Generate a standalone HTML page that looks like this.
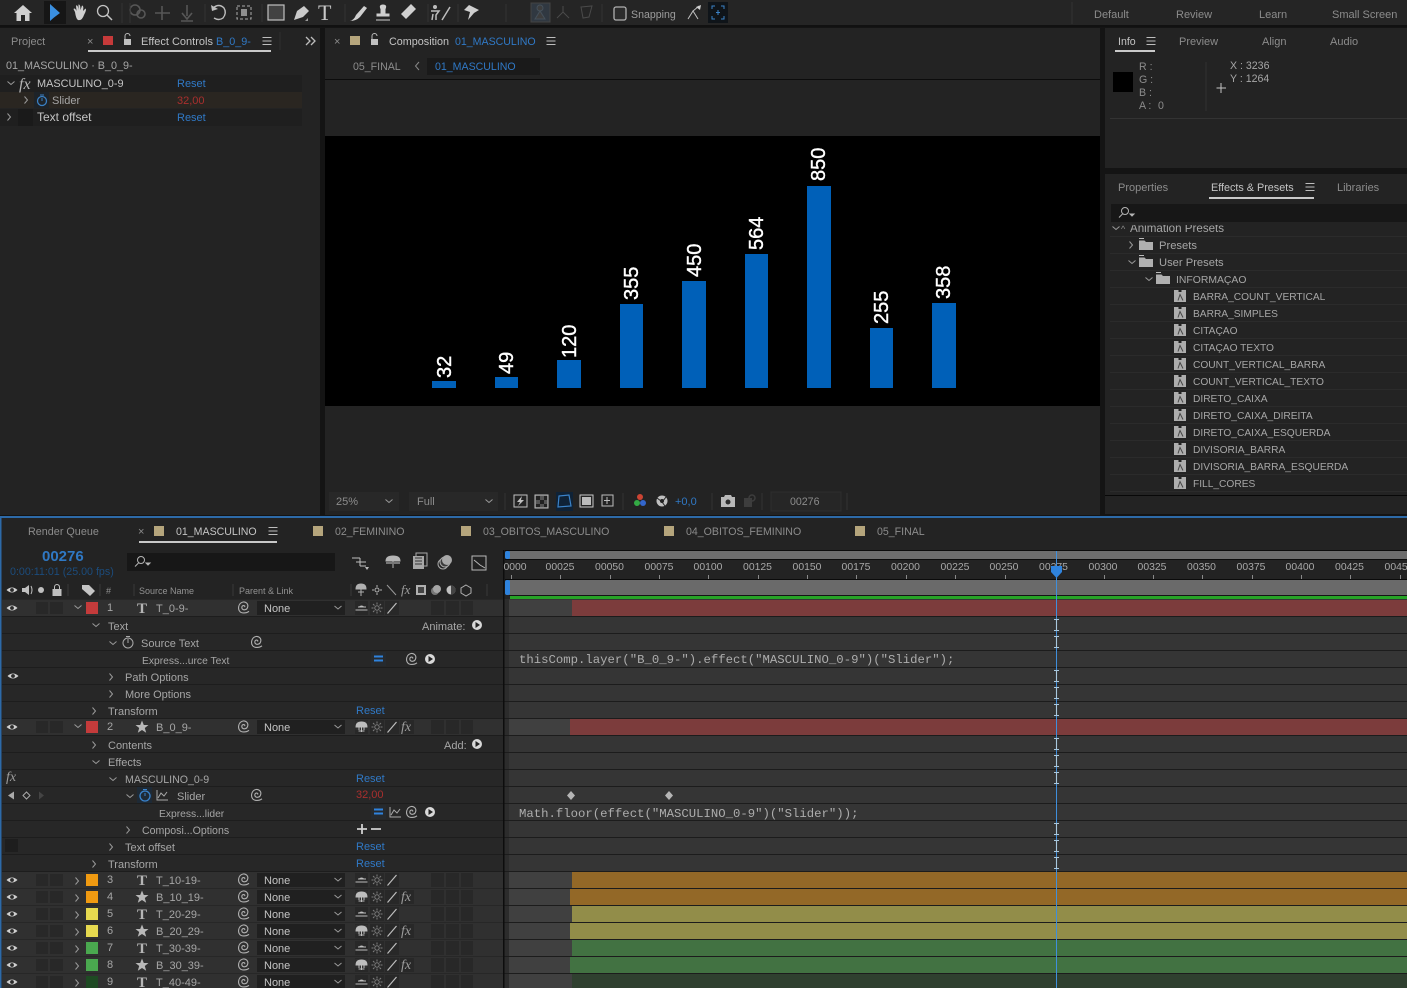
<!DOCTYPE html>
<html><head><meta charset="utf-8"><title>After Effects</title>
<style>
html,body{margin:0;padding:0;background:#141414;width:1407px;height:988px;overflow:hidden}
svg{display:block;position:absolute;left:0;top:0}
text{font-family:"Liberation Sans",sans-serif;font-size:11px;fill:#a6a6a6;white-space:pre}
.c{font-size:10.6px}
.p{font-size:10.2px}
.b{fill:#3079c6}
.r{fill:#a92f2e}
.w{fill:#c4c4c4}
.d{fill:#8c8c8c}
.m{font-family:"Liberation Mono",monospace;font-size:12.3px;fill:#adadad}
.n{font-size:20px;fill:#fff;stroke:#fff;stroke-width:.4}
.tk{font-size:10.4px;fill:#a8a8a8;text-anchor:middle}
.s{font-family:"Liberation Serif",serif;font-weight:bold;font-size:15px;fill:#b5b5b5}
.f{font-family:"Liberation Serif",serif;font-style:italic;font-size:14px;fill:#9c9c9c}
.h{font-size:9px;fill:#929292}
</style></head><body>
<svg width="1407" height="988" viewBox="0 0 1407 988">
<defs>
<g id="eye"><path d="M-5.5 0Q0-5 5.5 0Q0 5-5.5 0Z" fill="#cfcfcf"/><circle r="1.9" fill="#2b2b2b"/></g>
<path id="sp" fill="none" stroke="#b0b0b0" stroke-width="1.100" d="M.5-.5C2-2-2.200-3-2.200 0C-2.200 3.200 3.200 3.200 3.800-1C4.300-4.300 1-6-1-5.500C-5.500-4.500-6.500 1-4.300 3.800C-2.700 6 2.200 6 5 3.800"/>
<path id="cr" fill="none" stroke="#9a9a9a" d="M-1.5-3.5L1.5 0L-1.5 3.5"/>
<path id="cd" fill="none" stroke="#9a9a9a" d="M-3.5-1.5L0 1.5L3.5-1.5"/>
<g id="ham" stroke="#bdbdbd"><path d="M-4.500-3.500H4.500M-4.500 0H4.500M-4.500 3.500H4.500"/></g>
<polygon id="star" fill="#b8b8b8" points="0,-6.500 1.800,-2 6.500,-2 2.800,1 4.200,5.800 0,3 -4.200,5.800 -2.800,1 -6.500,-2 -1.800,-2"/>
<g id="play"><circle r="5" fill="#d8d8d8"/><path d="M-1.500-3L3 0L-1.500 3Z" fill="#222"/></g>
<g id="ib" fill="none" stroke="#a9c8de" stroke-width="1.100"><path d="M-2.500-5.500H2.500M-2.500 5.500H2.500M0-5.500V5.500"/></g>
<g id="lay">
<rect x="2" y="-8" width="501" height="16" fill="#303030"/>
<use href="#eye" x="12"/>
<rect x="36" y="-6" width="12" height="12" fill="#282828"/><rect x="50" y="-6" width="13" height="12" fill="#282828"/>
<rect x="257" y="-7" width="88" height="14" fill="#202020"/>
<use href="#cd" x="338" y="-.5"/>
<use href="#sp" x="244" y="-.5"/>
<rect x="355" y="-7" width="13" height="14" fill="#282828"/><rect x="370" y="-7" width="14" height="14" fill="#282828"/><rect x="385" y="-7" width="14" height="14" fill="#282828"/>
<path d="M358-1H366M355.500 2H367.500" stroke="#bdbdbd"/><path d="M358.500-1Q361.500-4 364.500-1" fill="#bdbdbd"/>
<g fill="none" stroke="#7e7e7e"><circle cx="377" r="2.200"/><path d="M377-5.500V-3.500M377 3.500V5.500M371.500 0H373.500M380.500 0H382.500M373-4L374.500-2.500M381-4L379.500-2.500M373 4L374.500 2.500M381 4L379.500 2.500"/></g>
<path d="M387.500 5.500L396.500-5" stroke="#bdbdbd" stroke-width="1.200"/>
<rect x="431" y="-7" width="13" height="14" fill="#282828"/><rect x="446" y="-7" width="13" height="14" fill="#282828"/><rect x="461" y="-7" width="12" height="14" fill="#282828"/>
</g>
<g id="shy"><rect x="355.500" y="-6" width="12" height="9" fill="#303030"/><path d="M356 0Q356-5 361.500-5Q367-5 367 0ZM361.500 0V5M358.500 4H364.500M359 0V3M364 0V3" fill="#bdbdbd" stroke="#bdbdbd"/></g>
<g id="fb"><rect x="400" y="-7" width="14" height="14" fill="#282828"/></g>
<g id="pf"><path d="M-7-6.500H-2" stroke="#bbb"/><path d="M-7-4.500H-1.500L0-3H7V5H-7Z" fill="#b0b0b0"/></g>
<g id="pr"><path d="M-6-3V-6H-1.500V-4H1.500V-6H6V6H-6Z" fill="#adadad"/><path d="M-2 4.500L0-1.500L1.500 1.500L3 4.500" stroke="#474747" fill="none"/></g>
</defs>

<rect width="1407" height="988" fill="#141414"/>
<!-- top toolbar -->
<rect width="1407" height="25" fill="#252525"/>
<rect y="25" width="1407" height="2" fill="#111"/>
<path d="M14 13L23 5L32 13H29.500V21H25V15H21V21H16.500V13Z" fill="#d0d0d0"/>
<rect x="44" y="1" width="22" height="23" fill="#161616"/>
<path d="M50 4V21L54 17.500L60 13Z" fill="#3a8fe0"/>
<path d="M75 12L73.500 9Q75 7.500 76.500 11L76 5.500Q78 4.500 78.500 10V4.500Q80.500 4 80.500 10L82 5.500Q84 5.500 83 11L85.500 8.500Q87 9.500 84 15Q82 21 78 20Q76 19 75 12Z" fill="#cfcfcf"/>
<circle cx="103" cy="11" r="5.500" fill="none" stroke="#c4c4c4" stroke-width="1.300"/><path d="M107 15L112 20" stroke="#c4c4c4" stroke-width="1.500"/>
<g fill="none" stroke="#575757" stroke-width="1.600"><circle cx="135" cy="10" r="5"/><circle cx="141" cy="14" r="4"/><path d="M155 13H170M162 6V20M187 5V16M182 13L187 19L192 13M181 21H193"/></g>
<path d="M213 8Q219 3 224 8Q227 13 223 18Q219 21 214 18" fill="none" stroke="#bdbdbd" stroke-width="1.400"/><path d="M211 5L212 11L218 9Z" fill="#bdbdbd"/>
<rect x="237" y="6" width="14" height="13" fill="none" stroke="#aaa" stroke-dasharray="3 2"/><rect x="241" y="9" width="6" height="7" fill="#8f8f8f"/>
<rect x="268" y="5" width="16" height="15" fill="#424242" stroke="#c0c0c0" stroke-width="1.200"/>
<path d="M294 20L297 11L304 6L309 11L303 17Z" fill="#cacaca"/><path d="M305 21H308V18" fill="#999"/>
<text x="318" y="20" style="font-family:'Liberation Serif',serif;font-size:22px;fill:#c8c8c8">T</text>
<path d="M350 21Q354 20 356 15L364 6L367 8L360 17Q356 21 350 21Z" fill="#cfcfcf"/>
<path d="M376 20H390M377 16H389V14H385V9Q387 5 383 5Q379 5 381 9V14H377Z" fill="#cfcfcf" stroke="#cfcfcf"/>
<path d="M401 14L411 4L416 9L406 19Z" fill="#d0d0d0"/>
<circle cx="435" cy="7" r="2" fill="#bdbdbd"/><path d="M431 11H439L436 15V20M433 14L432 20M442 20L450 7" stroke="#bdbdbd" stroke-width="1.500" fill="none"/>
<path d="M469 5L479 10L474 13L468 20L470 12L464 10Z" fill="#cfcfcf"/>
<g fill="#3d3d3d" stroke="#444"><rect x="531" y="3" width="19" height="19" fill="#303841"/><path d="M537 8a3 3 0 1 0 6 0a3 3 0 1 0-6 0M535 19L540 11L545 19Z" stroke="#45505a"/></g>
<path d="M563 6V12L557 18M563 12L569 18M581 7L592 6L589 17L583 18Z" stroke="#4a4a4a" fill="none"/>
<rect x="614" y="7" width="12" height="13" rx="2" fill="#2c2c2c" stroke="#b0b0b0" stroke-width="1.300"/>
<text x="631" y="18" class="c" style="fill:#9d9d9d">Snapping</text>
<path d="M688 19L693 11L698 19M699 6L693 11" stroke="#c0c0c0" fill="none"/><path d="M696 7L701 5L700 10Z" fill="#cfcfcf"/>
<rect x="708" y="2" width="20" height="21" fill="#0f1419"/>
<path d="M712 9V6H715M721 6H724V9M712 16V19H715M721 19H724V16M718 10V15M716 12.500H720" stroke="#3b83c9" fill="none"/>
<path d="M130 3V23M122 3V23M205 4V22M262 4V22M345 4V22M428 4V22M458 4V22M506 4V22M602 4V22M1072 2V24" stroke="#333"/>
<text x="1094" y="18" class="c d" style="font-size:11px">Default</text>
<text x="1176" y="18" class="c d" style="font-size:11px">Review</text>
<text x="1259" y="18" class="c d" style="font-size:11px">Learn</text>
<text x="1332" y="18" class="c d" style="font-size:11px">Small Screen</text>

<!-- left panel -->
<rect x="0" y="28" width="320" height="487" fill="#232323"/>
<text x="11" y="45" class="d">Project</text>
<text x="87" y="45" class="d">×</text>
<rect x="103" y="36" width="10" height="9" fill="#c63a3a"/>
<path d="M125 39V36a2.500 2.500 0 0 1 5 0" fill="none" stroke="#bbb"/><rect x="124" y="39" width="7" height="6" fill="#c0c0c0"/>
<text x="141" y="45" class="w">Effect Controls</text>
<text x="216" y="45" class="b" style="font-size:10.800px">B_0_9-</text>
<use href="#ham" x="267" y="41"/>
<rect x="88" y="50" width="183" height="2" fill="#c9c9c9"/>
<path d="M306 37L310 41L306 45M311 37L315 41L311 45" fill="none" stroke="#bdbdbd" stroke-width="1.300"/>
<path d="M280 32V50" stroke="#2f2f2f"/>
<text x="6" y="69" style="font-size:10.800px">01_MASCULINO · B_0_9-</text>
<rect x="0" y="75" width="302" height="17" fill="#1f1f1f"/>
<rect x="0" y="92" width="302" height="16" fill="#2a2621"/>
<rect x="0" y="109" width="302" height="17" fill="#1f1f1f"/>
<use href="#cd" x="11" y="83"/>
<text x="19" y="89" class="f" style="font-size:16px;fill:#b5b5b5">fx</text>
<text x="37" y="87" class="w" style="font-size:10.900px">MASCULINO_0-9</text>
<text x="177" y="87" class="b">Reset</text>
<use href="#cr" x="26" y="100"/>
<rect x="34" y="92" width="15" height="16" fill="#1e2328"/>
<circle cx="42" cy="101" r="4.500" fill="none" stroke="#3a7fc2" stroke-width="1.300"/><path d="M40 95H44M42 98V101" stroke="#3a7fc2"/>
<text x="52" y="104">Slider</text>
<text x="177" y="104" class="r">32,00</text>
<use href="#cr" x="9" y="117"/>
<rect x="18" y="109" width="15" height="17" fill="#1a1a1a"/>
<text x="37" y="121" class="w" style="font-size:12px">Text offset</text>
<text x="177" y="121" class="b">Reset</text>

<!-- comp panel -->
<rect x="325" y="28" width="775" height="487" fill="#232323"/>
<text x="334" y="45" class="d">×</text>
<rect x="350" y="36" width="10" height="9" fill="#b5a57c"/>
<path d="M372 39V36a2.500 2.500 0 0 1 5 0" fill="none" stroke="#bbb"/><rect x="371" y="39" width="7" height="6" fill="#c0c0c0"/>
<text x="389" y="45" class="w" style="font-size:10.800px">Composition</text>
<text x="455" y="45" class="b c">01_MASCULINO</text>
<use href="#ham" x="551" y="41"/>
<text x="353" y="70" class="c d">05_FINAL</text>
<path d="M419 62L415.500 66L419 70" fill="none" stroke="#888"/>
<rect x="427" y="58" width="113" height="17" fill="#1a1a1a"/>
<text x="435" y="70" class="b c">01_MASCULINO</text>
<rect x="325" y="79" width="775" height="1" fill="#0c0c0c"/>
<rect x="325" y="136" width="775" height="270" fill="#000"/>
<g fill="#0060b8">
<rect x="432" y="381" width="24" height="7"/><rect x="495" y="377" width="23" height="11"/><rect x="557" y="360" width="24" height="28"/><rect x="620" y="304" width="23" height="84"/><rect x="682" y="281" width="24" height="107"/><rect x="745" y="254" width="23" height="134"/><rect x="807" y="186" width="24" height="202"/><rect x="870" y="328" width="23" height="60"/><rect x="932" y="303" width="24" height="85"/>
</g>
<text class="n" transform="translate(451,378) rotate(-90)">32</text>
<text class="n" transform="translate(513,374) rotate(-90)">49</text>
<text class="n" transform="translate(576,358) rotate(-90)">120</text>
<text class="n" transform="translate(638,300) rotate(-90)">355</text>
<text class="n" transform="translate(701,277) rotate(-90)">450</text>
<text class="n" transform="translate(763,250) rotate(-90)">564</text>
<text class="n" transform="translate(825,181) rotate(-90)">850</text>
<text class="n" transform="translate(888,324) rotate(-90)">255</text>
<text class="n" transform="translate(950,299) rotate(-90)">358</text>
<!-- comp bottom bar -->
<rect x="329" y="492" width="70" height="19" fill="#282828"/><rect x="409" y="492" width="89" height="19" fill="#282828"/>
<text x="336" y="505" class="d" style="font-size:11px">25%</text>
<use href="#cd" x="389" y="501"/>
<text x="417" y="505" class="d">Full</text>
<use href="#cd" x="489" y="501"/>
<rect x="514" y="495" width="13" height="12" fill="none" stroke="#c0c0c0"/><path d="M522 496L517 502H520L518 506L524 500H521Z" fill="#c0c0c0"/>
<rect x="535" y="495" width="13" height="13" fill="#555" stroke="#bdbdbd"/><path d="M536 496h4v4h-4zM544 496h3v4h-3zM540 500h4v4h-4zM536 504h4v3h-4zM544 504h3v3h-3z" fill="#222"/>
<rect x="556" y="492" width="17" height="19" fill="#0f2236"/><path d="M559 496L569 495L571 506L558 507Z" fill="none" stroke="#3b83c9" stroke-width="1.200"/>
<rect x="580" y="495" width="13" height="12" fill="none" stroke="#c8c8c8"/><rect x="582" y="497" width="9" height="8" fill="#bbb"/>
<rect x="602" y="495" width="11" height="11" fill="none" stroke="#bdbdbd"/><path d="M607 497V504M604 500.500H610" stroke="#bdbdbd"/>
<circle cx="640" cy="497" r="3" fill="#c43"/><circle cx="637" cy="503" r="3" fill="#3a4"/><circle cx="643" cy="503" r="3" fill="#36c"/>
<circle cx="662" cy="501" r="5.500" fill="#c0c0c0"/><circle cx="662" cy="501" r="2" fill="#232323"/><path d="M657 498L661 501M666 497L663 501M665 506L662 502" stroke="#232323"/>
<text x="675" y="505" class="b" style="font-size:11px">+0,0</text>
<path d="M721 497H724L725 495H731L732 497H735V507H721Z" fill="#b8b8b8"/><circle cx="728" cy="502" r="2.500" fill="#2a2a2a"/>
<path d="M744 498H752V507H744Z" fill="#3d3d3d"/><circle cx="752" cy="498" r="3" fill="none" stroke="#3d3d3d" stroke-width="1.500"/>
<rect x="771" y="492" width="70" height="19" fill="#262626" stroke="#2e2e2e"/>
<text x="790" y="505" class="d" style="font-size:10.600px">00276</text>
<path d="M505 493V510M623 493V510M712 493V510M762 493V510M847 493V510" stroke="#333"/>

<!-- info panel -->
<rect x="1105" y="28" width="302" height="140" fill="#232323"/>
<text x="1118" y="45" class="w" style="font-size:10.600px">Info</text>
<use href="#ham" x="1151" y="41"/>
<rect x="1115" y="50" width="40" height="2" fill="#c9c9c9"/>
<text x="1179" y="45" class="d">Preview</text>
<text x="1262" y="45" class="d">Align</text>
<text x="1330" y="45" class="d">Audio</text>
<rect x="1113" y="72" width="20" height="20" fill="#000"/>
<text x="1139" y="70" class="d c">R :</text>
<text x="1139" y="83" class="d c">G :</text>
<text x="1139" y="96" class="d c">B :</text>
<text x="1139" y="109" class="d c">A :</text>
<text x="1158" y="109" class="d c">0</text>
<path d="M1206 62V111" stroke="#323232"/>
<text x="1230" y="69" class="c">X : 3236</text>
<text x="1230" y="82" class="c">Y : 1264</text>
<path d="M1221 83V93M1216.500 88H1226" stroke="#c5c5c5"/>
<rect x="1110" y="118" width="297" height="1" fill="#333"/>

<!-- effects panel -->
<rect x="1105" y="174" width="302" height="321" fill="#232323"/>
<text x="1118" y="191" class="d">Properties</text>
<text x="1211" y="191" class="w" style="font-size:10.800px">Effects &amp; Presets</text>
<use href="#ham" x="1310" y="187"/>
<rect x="1209" y="197" width="105" height="2" fill="#c9c9c9"/>
<text x="1337" y="191" class="d">Libraries</text>
<g stroke="#2b2b2b"><path d="M1110 236.500H1407M1110 253.500H1407M1110 270.500H1407M1110 287.500H1407M1110 304.500H1407M1110 321.500H1407M1110 338.500H1407M1110 355.500H1407M1110 372.500H1407M1110 389.500H1407M1110 406.500H1407M1110 423.500H1407M1110 440.500H1407M1110 457.500H1407M1110 474.500H1407M1110 491.500H1407"/></g>
<use href="#cd" x="1116" y="228"/>
<text x="1121" y="232" class="d" style="font-size:9px">^</text>
<text x="1130" y="232" style="font-size:11.600px">Animation Presets</text>
<rect x="1105" y="200" width="302" height="25" fill="#232323"/>
<rect x="1111" y="204" width="296" height="18" fill="#171717"/>
<circle cx="1125" cy="211" r="3.500" fill="none" stroke="#b5b5b5"/><path d="M1122.500 214L1119 217.500M1130 214H1134L1132 216Z" stroke="#b5b5b5" fill="#b5b5b5"/>
<use href="#cr" x="1131" y="245"/><use href="#pf" x="1146" y="245"/><text x="1159" y="249" style="font-size:11.200px">Presets</text>
<use href="#cd" x="1132" y="262"/><use href="#pf" x="1146" y="262"/><text x="1159" y="266" style="font-size:11.200px">User Presets</text>
<use href="#cd" x="1149" y="279"/><use href="#pf" x="1163" y="279"/><text x="1176" y="283" class="p" style="font-size:10.400px">INFORMAÇAO</text>
<use href="#pr" x="1180" y="296"/><text x="1193" y="300" class="p">BARRA_COUNT_VERTICAL</text>
<use href="#pr" x="1180" y="313"/><text x="1193" y="317" class="p">BARRA_SIMPLES</text>
<use href="#pr" x="1180" y="330"/><text x="1193" y="334" class="p">CITAÇAO</text>
<use href="#pr" x="1180" y="347"/><text x="1193" y="351" class="p">CITAÇAO TEXTO</text>
<use href="#pr" x="1180" y="364"/><text x="1193" y="368" class="p">COUNT_VERTICAL_BARRA</text>
<use href="#pr" x="1180" y="381"/><text x="1193" y="385" class="p">COUNT_VERTICAL_TEXTO</text>
<use href="#pr" x="1180" y="398"/><text x="1193" y="402" class="p">DIRETO_CAIXA</text>
<use href="#pr" x="1180" y="415"/><text x="1193" y="419" class="p">DIRETO_CAIXA_DIREITA</text>
<use href="#pr" x="1180" y="432"/><text x="1193" y="436" class="p">DIRETO_CAIXA_ESQUERDA</text>
<use href="#pr" x="1180" y="449"/><text x="1193" y="453" class="p">DIVISORIA_BARRA</text>
<use href="#pr" x="1180" y="466"/><text x="1193" y="470" class="p">DIVISORIA_BARRA_ESQUERDA</text>
<use href="#pr" x="1180" y="483"/><text x="1193" y="487" class="p">FILL_CORES</text>
<rect x="1105" y="495" width="302" height="1" fill="#080808"/>
<rect x="1105" y="496" width="302" height="18" fill="#232323"/>

<!-- timeline panel -->
<rect x="0" y="516" width="1407" height="472" fill="#232323"/>
<rect x="0" y="516" width="1407" height="2" fill="#2d6aa8"/>
<rect x="0" y="516" width="1.500" height="472" fill="#2d6aa8"/>
<text x="28" y="535" class="d" style="font-size:10.800px">Render Queue</text>
<text x="138" y="535" class="d">×</text>
<rect x="154" y="526" width="10" height="10" fill="#b5a57c"/>
<text x="176" y="535" class="w c">01_MASCULINO</text>
<use href="#ham" x="273" y="531"/>
<rect x="139" y="541" width="138" height="2" fill="#c9c9c9"/>
<rect x="313" y="526" width="10" height="10" fill="#b5a57c"/><text x="335" y="535" class="d c">02_FEMININO</text>
<rect x="461" y="526" width="10" height="10" fill="#b5a57c"/><text x="483" y="535" class="d c">03_OBITOS_MASCULINO</text>
<rect x="664" y="526" width="10" height="10" fill="#b5a57c"/><text x="686" y="535" class="d c">04_OBITOS_FEMININO</text>
<rect x="855" y="526" width="10" height="10" fill="#b5a57c"/><text x="877" y="535" class="d c">05_FINAL</text>
<text x="42" y="561" style="font-size:15px;font-weight:bold;fill:#2f78c4">00276</text>
<text x="10" y="575" style="font-size:10.700px;fill:#1c4c7c">0:00:11:01 (25.00 fps)</text>
<rect x="127" y="553" width="208" height="18" fill="#171717"/>
<circle cx="141" cy="560" r="3.500" fill="none" stroke="#b5b5b5"/><path d="M138.500 563L135 566.500M146 563H150L148 565Z" stroke="#b5b5b5" fill="#b5b5b5"/>
<path d="M352 558H360M360 558V566M356 562H366M360 566H366" stroke="#bfbfbf" fill="none"/><path d="M365 567L369 567L367 570Z" fill="#bbb"/>
<path d="M386 561Q386 556 393 556Q400 556 400 561ZM393 561V568" fill="#b5b5b5" stroke="#b5b5b5"/><rect x="386" y="562" width="14" height="2" fill="#777"/>
<rect x="413" y="556" width="11" height="13" fill="#a8a8a8"/><path d="M416 556V553H427V566H424M415 559H422M415 562H422M415 565H422" stroke="#a8a8a8" fill="none"/><path d="M415 558H422M415 561H422M415 564H422" stroke="#333"/>
<circle cx="443" cy="564" r="5" fill="none" stroke="#a8a8a8"/><circle cx="445" cy="562" r="5" fill="#3c3c3c" stroke="#a8a8a8"/><circle cx="447" cy="560" r="5" fill="#a8a8a8"/>
<path d="M472 556H486V570H472Z" fill="none" stroke="#b8b8b8"/><path d="M474 560L480 565L485 568" stroke="#b8b8b8" fill="none"/>

<!-- column header -->
<use href="#eye" x="12" y="590"/>
<path d="M22 588H25L29 585V595L25 592H22Z" fill="#c0c0c0"/><path d="M31 586Q33 590 31 594" stroke="#c0c0c0" fill="none"/>
<circle cx="41" cy="590" r="3" fill="#c0c0c0"/>
<rect x="52.500" y="589" width="9" height="7" fill="#c0c0c0"/><path d="M54.500 589V587a2.500 2.500 0 0 1 5 0V589" fill="none" stroke="#c0c0c0"/>
<path d="M68 584V596M100 584V596M134 584V596M233 584V596M351 584V596M487 584V596" stroke="#3a3a3a"/>
<path d="M82 585H89L95 591L90 596L82 589Z" fill="#c4c4c4"/>
<text x="106" y="594" class="h">#</text>
<text x="139" y="594" class="h">Source Name</text>
<text x="239" y="594" class="h">Parent &amp; Link</text>
<path d="M356 589Q356 584 361 584Q366 584 366 589ZM361 589V596M358 592H364" fill="#b0b0b0" stroke="#b0b0b0"/>
<circle cx="377" cy="590" r="2" fill="none" stroke="#b0b0b0"/><path d="M377 585V587M377 593V595M372 590H374M380 590H382" stroke="#b0b0b0"/>
<path d="M387 585L396 595" stroke="#999"/>
<text x="401" y="594" class="f" style="font-size:13px">fx</text>
<rect x="416" y="585" width="10" height="10" fill="#b0b0b0"/><path d="M418 587H424V593H418Z" fill="#444"/>
<circle cx="435" cy="591" r="4" fill="#777"/><circle cx="437" cy="589" r="4" fill="#a5a5a5"/>
<circle cx="451" cy="590" r="4.500" fill="#c0c0c0"/><path d="M451 585.500A4.500 4.500 0 0 1 451 594.500Z" fill="#444"/>
<path d="M466 585L471 588V593L466 596L461 593V588Z" fill="none" stroke="#b0b0b0"/>

<!-- timeline right area -->
<rect x="504" y="599" width="903" height="389" fill="#353535"/>
<rect x="504" y="599" width="5" height="389" fill="#2c2c2c"/>
<g stroke="#1c1c1c"><path d="M504 616.500H1407M504 633.500H1407M504 650.500H1407M504 667.500H1407M504 684.500H1407M504 701.500H1407M504 718.500H1407M504 735.500H1407M504 752.500H1407M504 769.500H1407M504 786.500H1407M504 803.500H1407M504 820.500H1407M504 837.500H1407M504 854.500H1407M504 871.500H1407M504 888.500H1407M504 905.500H1407M504 922.500H1407M504 939.500H1407M504 956.500H1407M504 973.500H1407"/></g>
<!-- left rows bg -->
<rect x="2" y="599" width="501" height="389" fill="#272727"/>
<g stroke="#1d1d1d"><path d="M2 616.500H503M2 633.500H503M2 650.500H503M2 667.500H503M2 684.500H503M2 701.500H503M2 718.500H503M2 735.500H503M2 752.500H503M2 769.500H503M2 786.500H503M2 803.500H503M2 820.500H503M2 837.500H503M2 854.500H503M2 871.500H503"/></g>
<rect x="503" y="550" width="1.500" height="438" fill="#0d0d0d"/>
<!-- nav / ruler -->
<rect x="509" y="551" width="898" height="8" fill="#6d6d6d"/>
<rect x="505" y="550" width="902" height="1" fill="#0b0b0b"/><rect x="505" y="559" width="902" height="1" fill="#0b0b0b"/>
<rect x="505" y="551" width="5" height="8" rx="2" fill="#2f83dd"/>
<g>
<text x="515" y="570" class="tk">0000</text><text x="560" y="570" class="tk">00025</text><text x="609.500" y="570" class="tk">00050</text><text x="659" y="570" class="tk">00075</text><text x="708" y="570" class="tk">00100</text><text x="757.500" y="570" class="tk">00125</text><text x="807" y="570" class="tk">00150</text><text x="856" y="570" class="tk">00175</text><text x="905.500" y="570" class="tk">00200</text><text x="955" y="570" class="tk">00225</text><text x="1004" y="570" class="tk">00250</text><text x="1053.500" y="570" class="tk">00275</text><text x="1103" y="570" class="tk">00300</text><text x="1152" y="570" class="tk">00325</text><text x="1201.500" y="570" class="tk">00350</text><text x="1251" y="570" class="tk">00375</text><text x="1300" y="570" class="tk">00400</text><text x="1349.500" y="570" class="tk">00425</text><text x="1399" y="570" class="tk">00450</text>
</g>
<path d="M511.500 575V579M560.500 575V579M610.500 575V579M659.500 575V579M708.500 575V579M758.500 575V579M807.500 575V579M856.500 575V579M906.500 575V579M955.500 575V579M1005.500 575V579M1104.500 575V579M1153.500 575V579M1202.500 575V579M1252.500 575V579M1301.500 575V579M1350.500 575V579M1400.500 575V579" stroke="#8a8a8a"/>
<rect x="505" y="579" width="902" height="1" fill="#0b0b0b"/>
<rect x="509" y="580" width="898" height="15" fill="#6a6a6a"/>
<rect x="505" y="580" width="5" height="15" rx="2" fill="#2f83dd"/>
<rect x="509" y="595" width="898" height="1" fill="#151515"/>
<rect x="510" y="596" width="897" height="3" fill="#27a327"/>

<!-- layer bars -->
<rect x="509" y="600" width="63" height="16" fill="#404040"/><rect x="572" y="600" width="835" height="16" fill="#7c3c3c"/>
<rect x="509" y="719" width="61" height="16" fill="#404040"/><rect x="570" y="719" width="837" height="16" fill="#7c3c3c"/>
<rect x="509" y="872" width="63" height="16" fill="#404040"/><rect x="572" y="872" width="835" height="16" fill="#936827"/>
<rect x="509" y="889" width="61" height="16" fill="#404040"/><rect x="570" y="889" width="837" height="16" fill="#936827"/>
<rect x="509" y="906" width="63" height="16" fill="#404040"/><rect x="572" y="906" width="835" height="16" fill="#928d49"/>
<rect x="509" y="923" width="61" height="16" fill="#404040"/><rect x="570" y="923" width="837" height="16" fill="#928d49"/>
<rect x="509" y="940" width="63" height="16" fill="#404040"/><rect x="572" y="940" width="835" height="16" fill="#427242"/>
<rect x="509" y="957" width="61" height="16" fill="#404040"/><rect x="570" y="957" width="837" height="16" fill="#427242"/>
<rect x="509" y="974" width="63" height="14" fill="#404040"/><rect x="572" y="974" width="835" height="14" fill="#2f402f"/>
<text x="519" y="663" class="m">thisComp.layer("B_0_9-").effect("MASCULINO_0-9")("Slider");</text>
<text x="519" y="817" class="m">Math.floor(effect("MASCULINO_0-9")("Slider"));</text>
<path d="M571 791L575 795.500L571 800L567 795.500ZM669 791L673 795.500L669 800L665 795.500Z" fill="#b5b5b5"/>
<!-- playhead -->
<rect x="1056" y="551" width="1" height="437" fill="#3f8fdc"/>
<path d="M1051 566H1062V572L1056.500 578L1051 572Z" fill="#2f83dd"/>
<use href="#ib" x="1056.500" y="625"/><use href="#ib" x="1056.500" y="642"/><use href="#ib" x="1056.500" y="676"/><use href="#ib" x="1056.500" y="693"/><use href="#ib" x="1056.500" y="710"/><use href="#ib" x="1056.500" y="744"/><use href="#ib" x="1056.500" y="761"/><use href="#ib" x="1056.500" y="778"/><use href="#ib" x="1056.500" y="829"/><use href="#ib" x="1056.500" y="846"/><use href="#ib" x="1056.500" y="863"/>

<!-- layer rows -->
<use href="#lay" y="608"/><use href="#cd" x="78" y="607"/><rect x="86" y="602" width="12" height="12" fill="#c43b3b"/><text x="107" y="611">1</text><text x="137" y="613" class="s">T</text><text x="156" y="612">T_0-9-</text><text x="264" y="612" class="w">None</text>
<use href="#lay" y="727"/><use href="#fb" y="727"/><use href="#cd" x="78" y="726"/><rect x="86" y="721" width="12" height="12" fill="#c43b3b"/><text x="107" y="730">2</text><use href="#star" x="142" y="727"/><text x="156" y="731">B_0_9-</text><text x="264" y="731" class="w">None</text><use href="#shy" y="727"/><text x="401" y="731" class="f">fx</text>
<use href="#lay" y="880"/><use href="#cr" x="77" y="881"/><rect x="86" y="874" width="12" height="12" fill="#f09a11"/><text x="107" y="883">3</text><text x="137" y="885" class="s">T</text><text x="156" y="884">T_10-19-</text><text x="264" y="884" class="w">None</text>
<use href="#lay" y="897"/><use href="#fb" y="897"/><use href="#cr" x="77" y="898"/><rect x="86" y="891" width="12" height="12" fill="#f09a11"/><text x="107" y="900">4</text><use href="#star" x="142" y="897"/><text x="156" y="901">B_10_19-</text><text x="264" y="901" class="w">None</text><use href="#shy" y="897"/><text x="401" y="901" class="f">fx</text>
<use href="#lay" y="914"/><use href="#cr" x="77" y="915"/><rect x="86" y="908" width="12" height="12" fill="#e6d94f"/><text x="107" y="917">5</text><text x="137" y="919" class="s">T</text><text x="156" y="918">T_20-29-</text><text x="264" y="918" class="w">None</text>
<use href="#lay" y="931"/><use href="#fb" y="931"/><use href="#cr" x="77" y="932"/><rect x="86" y="925" width="12" height="12" fill="#e6d94f"/><text x="107" y="934">6</text><use href="#star" x="142" y="931"/><text x="156" y="935">B_20_29-</text><text x="264" y="935" class="w">None</text><use href="#shy" y="931"/><text x="401" y="935" class="f">fx</text>
<use href="#lay" y="948"/><use href="#cr" x="77" y="949"/><rect x="86" y="942" width="12" height="12" fill="#4aa84f"/><text x="107" y="951">7</text><text x="137" y="953" class="s">T</text><text x="156" y="952">T_30-39-</text><text x="264" y="952" class="w">None</text>
<use href="#lay" y="965"/><use href="#fb" y="965"/><use href="#cr" x="77" y="966"/><rect x="86" y="959" width="12" height="12" fill="#4aa84f"/><text x="107" y="968">8</text><use href="#star" x="142" y="965"/><text x="156" y="969">B_30_39-</text><text x="264" y="969" class="w">None</text><use href="#shy" y="965"/><text x="401" y="969" class="f">fx</text>
<use href="#lay" y="982"/><use href="#cr" x="77" y="983"/><rect x="86" y="976" width="12" height="12" fill="#1e4a23"/><text x="107" y="985">9</text><text x="137" y="987" class="s">T</text><text x="156" y="986">T_40-49-</text><text x="264" y="986" class="w">None</text>

<!-- property rows -->
<use href="#cd" x="96" y="625"/><text x="108" y="630">Text</text>
<text x="422" y="630">Animate:</text><use href="#play" x="477" y="625"/>
<use href="#cd" x="113" y="643"/><circle cx="128" cy="643" r="5" fill="none" stroke="#aaa"/><path d="M126 636.500H130M128 639V643" stroke="#aaa"/>
<text x="141" y="647">Source Text</text><use href="#sp" x="257" y="642"/>
<text x="142" y="664" style="font-size:10.300px">Express...urce Text</text>
<rect x="371" y="652" width="15" height="14" fill="#262a2e"/><path d="M374 656.500H383M374 660.500H383" stroke="#2f83dd" stroke-width="2"/>
<use href="#sp" x="412" y="659"/><use href="#play" x="430" y="659"/>
<use href="#eye" x="13" y="676"/><use href="#cr" x="111" y="677"/><text x="125" y="681">Path Options</text>
<use href="#cr" x="111" y="694"/><text x="125" y="698">More Options</text>
<use href="#cr" x="94" y="711"/><text x="108" y="715">Transform</text><text x="356" y="714" class="b">Reset</text>
<use href="#cr" x="94" y="745"/><text x="108" y="749">Contents</text><text x="444" y="749">Add:</text><use href="#play" x="477" y="744"/>
<use href="#cd" x="96" y="762"/><text x="108" y="766">Effects</text>
<text x="6" y="781" class="f" style="font-size:14px">fx</text>
<use href="#cd" x="113" y="779"/><text x="125" y="783" style="font-size:10.600px">MASCULINO_0-9</text><text x="356" y="782" class="b">Reset</text>
<path d="M14 791.500L8 795.500L14 799.500Z" fill="#aaa"/><path d="M26.500 792L30 795.500L26.500 799L23 795.500Z" fill="none" stroke="#aaa"/><path d="M39 791.500L44 795.500L39 799.500Z" fill="#444"/>
<use href="#cd" x="130" y="796"/><rect x="137" y="787" width="15" height="16" fill="#1e2a36"/>
<circle cx="145" cy="796" r="5" fill="none" stroke="#3a83cc" stroke-width="1.300"/><path d="M143 789.500H147M145 793V796" stroke="#3a83cc"/>
<path d="M157 790V800H168M158 798L161 793L164 796L167 792" fill="none" stroke="#aaa"/>
<text x="177" y="800">Slider</text><use href="#sp" x="257" y="795"/><text x="356" y="798" class="r">32,00</text>
<text x="159" y="817" style="font-size:10.300px">Express...lider</text>
<rect x="371" y="805" width="15" height="14" fill="#262a2e"/><path d="M374 809.500H383M374 813.500H383" stroke="#2f83dd" stroke-width="2"/>
<path d="M390 807V817H401M391 815L394 810L397 813L400 809" fill="none" stroke="#aaa"/>
<use href="#sp" x="412" y="812"/><use href="#play" x="430" y="812"/>
<use href="#cr" x="128" y="830"/><text x="142" y="834" style="font-size:10.600px">Composi...Options</text>
<path d="M357 829H367M362 824V834M371 829H381" stroke="#cfcfcf" stroke-width="1.800"/>
<rect x="5" y="839" width="13" height="13" fill="#1e1e1e"/><use href="#cr" x="111" y="847"/><text x="125" y="851">Text offset</text><text x="356" y="850" class="b">Reset</text>
<use href="#cr" x="94" y="864"/><text x="108" y="868">Transform</text><text x="356" y="867" class="b">Reset</text>
</svg>
</body></html>
